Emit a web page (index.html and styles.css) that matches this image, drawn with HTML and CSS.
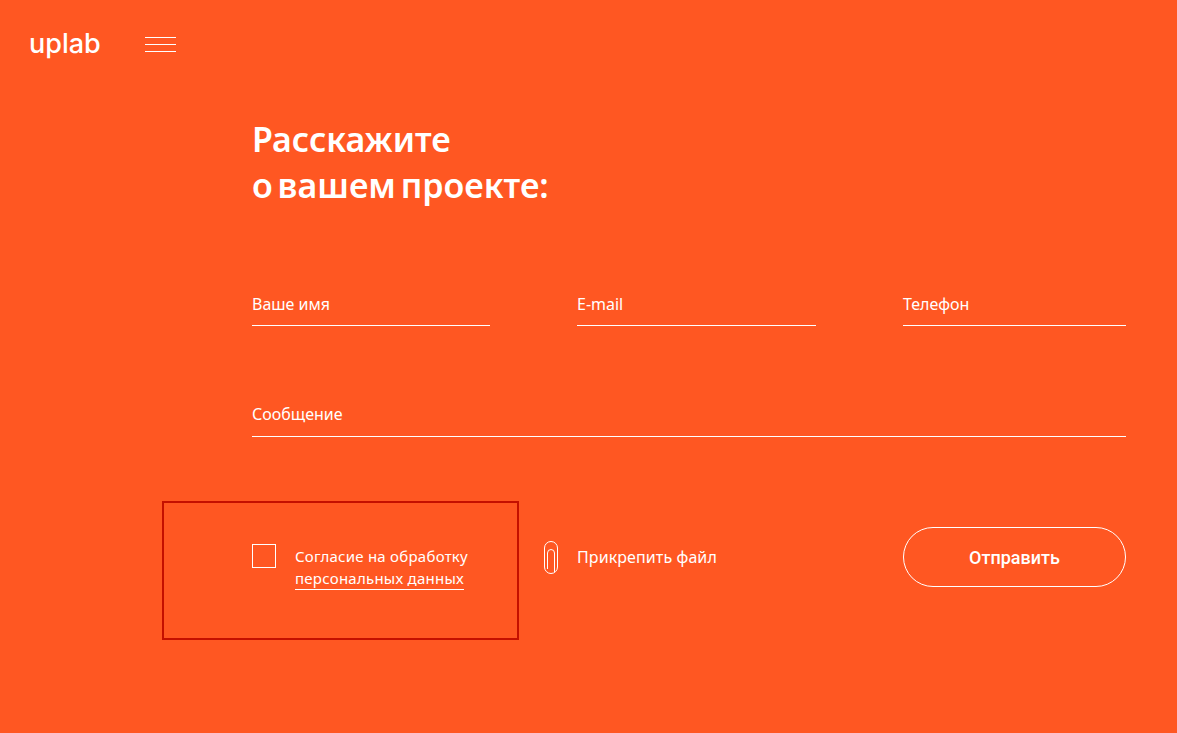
FILE: index.html
```html
<!DOCTYPE html>
<html lang="ru">
<head>
    <meta charset="UTF-8">
    <meta name="viewport" content="width=device-width, initial-scale=1.0">
    <title>Uplab</title>
    <link rel="stylesheet" href="styles.css">
</head>
<body>
    <header class="header">
        <a class="logo" href="#">uplab</a>
        <button class="burger" type="button" aria-label="Меню">
            <span></span>
            <span></span>
            <span></span>
        </button>
    </header>

    <main class="content">
        <h1 class="title">Расскажите<br>о вашем проекте:</h1>

        <form class="form">
            <div class="fields">
                <label class="field">Ваше имя</label>
                <label class="field">E-mail</label>
                <label class="field">Телефон</label>
                <label class="field field-wide">Сообщение</label>
            </div>

            <div class="actions">
                <div class="consent">
                    <span class="checkbox"></span>
                    <span class="consent-text">Согласие на обработку<br><a href="#">персональных данных</a></span>
                </div>
                <div class="attach">
                    <svg class="clip" width="16" height="35" viewBox="0 0 16 35" fill="none" stroke="#fff" stroke-width="1">
                        <path d="M1.500 27V8a6.500 6.500 0 0 1 13 0v19a6.500 6.500 0 0 1 -13 0z"/>
                        <path d="M4.500 29V13a3.500 3.500 0 0 1 7 0v19"/>
                    </svg>
                    <span>Прикрепить файл</span>
                </div>
                <button class="submit" type="button">Отправить</button>
            </div>
        </form>
    </main>
</body>
</html>
```

FILE: styles.css
```css
* {
    box-sizing: border-box;
}

body {
    margin: 0;
    height: 733px;
    overflow: hidden;
    background-color: #ff5722;
    color: #fff;
    font-family: 'Noto Sans', sans-serif;
}

.header {
    display: flex;
    align-items: center;
    height: 88px;
    padding-left: 29px;
}

.logo {
    width: 116px;
    color: #fff;
    font-family: Inter, sans-serif;
    font-size: 27px;
    font-weight: 500;
    line-height: 30px;
    text-decoration: none;
}

.burger {
    display: flex;
    flex-direction: column;
    gap: 6px;
    width: 31px;
    padding: 0;
    border: none;
    background: none;
}

.burger span {
    display: block;
    height: 1px;
    background-color: #fff;
}

.content {
    padding: 28px 51px 0 252px;
}

.title {
    margin: 0;
    font-size: 34px;
    font-weight: 600;
    line-height: 46px;
    word-spacing: -4px;
}

.fields {
    display: grid;
    grid-template-columns: 238px 239px 223px;
    column-gap: 87px;
    row-gap: 65px;
    margin-top: 72px;
}

.field {
    display: block;
    height: 46px;
    padding-top: 13px;
    border-bottom: 1px solid #fff;
    font-size: 16px;
    line-height: 22px;
}

.field-wide {
    grid-column: 1 / -1;
    padding-top: 12px;
}

.actions {
    display: grid;
    grid-template-columns: 238px 239px 223px;
    column-gap: 87px;
    align-items: center;
    margin-top: 64px;
}

.consent {
    display: flex;
    align-items: flex-start;
    gap: 19px;
    height: 139px;
    margin: 0 -29px -27px -90px;
    padding: 41px 0 0 88px;
    border: 2px solid #c41000;
    font-size: 15px;
    letter-spacing: 0.25px;
    line-height: 22px;
}

.checkbox {
    flex: none;
    width: 24px;
    height: 24px;
    border: 1px solid #fff;
}

.consent-text {
    margin-top: 1px;
}

.consent-text a {
    display: inline-block;
    border-bottom: 1px solid #fff;
    color: #fff;
    text-decoration: none;
}

.attach {
    display: flex;
    align-items: center;
    gap: 18px;
    margin-left: -34px;
    font-size: 16px;
    letter-spacing: 0.1px;
}

.submit {
    height: 60px;
    border: 1px solid #fff;
    border-radius: 30px;
    background: none;
    color: #fff;
    font-family: Roboto, sans-serif;
    font-size: 18px;
    font-weight: 500;
}
```
